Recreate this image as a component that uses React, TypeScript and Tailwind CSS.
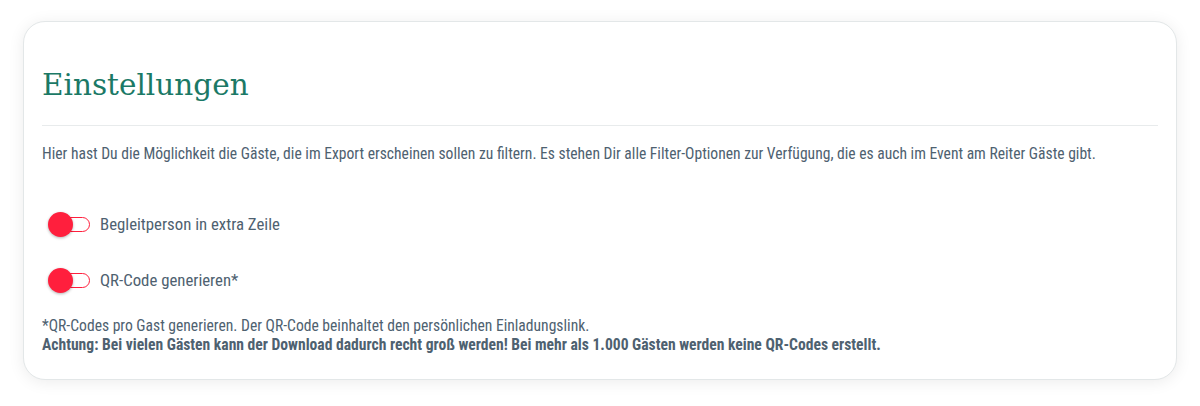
import { useState } from 'react';

function Toggle({ on, onChange }: { on: boolean; onChange: () => void }) {
  return (
    <button onClick={onChange} className="relative w-[42px] h-[25px] flex items-center shrink-0">
      <span className="absolute left-[5px] right-0 h-[15px] rounded-full border border-[#ff1f3d] bg-white" />
      <span
        className={`absolute top-0 w-[25px] h-[25px] rounded-full bg-[#ff1f3d] shadow-[0_1px_3px_rgba(0,0,0,0.3)] transition-all ${
          on ? 'left-[17px]' : 'left-0'
        }`}
      />
    </button>
  );
}

export default function App() {
  const [begleit, setBegleit] = useState(false);
  const [qr, setQr] = useState(false);

  return (
    <div className="w-[1200px] h-[406px] bg-white pt-[21px] px-[23px] font-['Roboto_Condensed','DejaVu_Sans_Condensed',sans-serif] text-[#4e6170]">
      <div className="h-[359px] bg-white rounded-[22px] border border-[#e3e7e8] shadow-[0_2px_16px_rgba(0,0,0,0.08)] px-[18px] pt-[41px]">
        {/* Header */}
        <h1 className="font-['Roboto_Slab','DejaVu_Serif',serif] text-[29.5px] leading-[44px] text-[#1b7966]">
          Einstellungen
        </h1>
        <div className="mt-[18px] h-px bg-[#e8ebec]" />

        <p className="mt-[18px] text-[15.6px] leading-[20px]">
          Hier hast Du die Möglichkeit die Gäste, die im Export erscheinen sollen zu filtern. Es stehen Dir alle Filter-Optionen zur Verfügung, die es auch im Event am Reiter Gäste gibt.
        </p>

        {/* Optionen */}
        <div className="mt-[48px] flex flex-col gap-[31px] pl-[6px]">
          <label className="flex items-center gap-[10px] text-[16.8px] leading-[25px]">
            <Toggle on={begleit} onChange={() => setBegleit(!begleit)} />
            Begleitperson in extra Zeile
          </label>
          <label className="flex items-center gap-[10px] text-[16.8px] leading-[25px]">
            <Toggle on={qr} onChange={() => setQr(!qr)} />
            QR-Code generieren*
          </label>
        </div>

        <div className="mt-[24px] text-[15.6px] leading-[19px]">
          <p>*QR-Codes pro Gast generieren. Der QR-Code beinhaltet den persönlichen Einladungslink.</p>
          <p className="font-bold">
            Achtung: Bei vielen Gästen kann der Download dadurch recht groß werden! Bei mehr als 1.000 Gästen werden keine QR-Codes erstellt.
          </p>
        </div>
      </div>
    </div>
  );
}
